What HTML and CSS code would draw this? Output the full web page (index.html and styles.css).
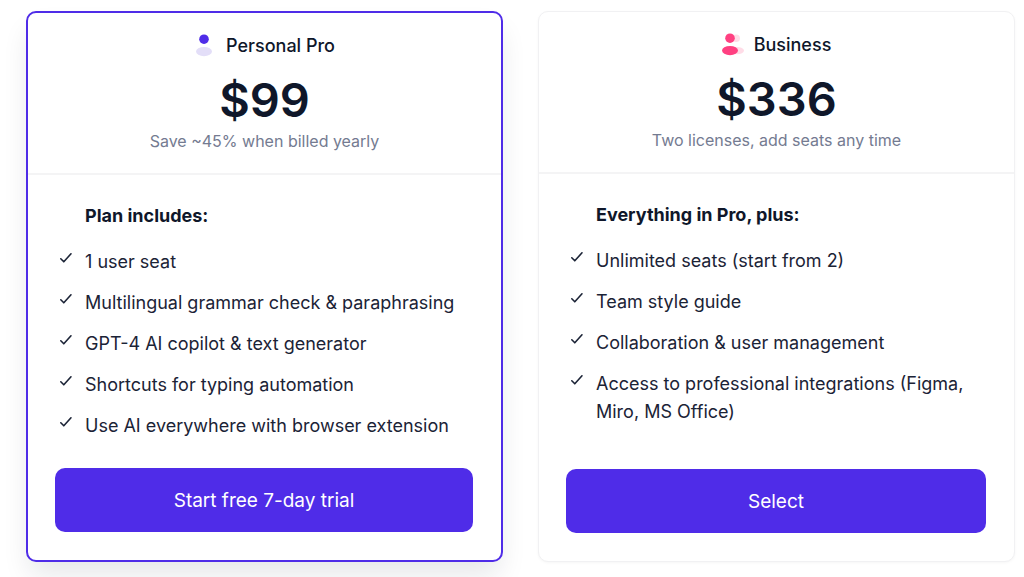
FILE: index.html
```html
<!DOCTYPE html>
<html lang="en">
<head>
  <meta charset="UTF-8" />
  <meta name="viewport" content="width=device-width, initial-scale=1.0" />
  <title>Pricing</title>
  <link rel="stylesheet" href="styles.css">
</head>
<body>
  <svg class="sprite" aria-hidden="true">
    <symbol id="check" viewBox="0 0 14 14">
      <path d="M1.8 7.8 L4.8 10.8 L12 2.8" fill="none" stroke="currentColor" stroke-width="1.6" stroke-linecap="round" stroke-linejoin="round" />
    </symbol>
  </svg>

  <main class="plans">
    <section class="plan featured">
      <header class="plan-header">
        <h2 class="plan-name">
          <svg class="plan-icon" viewBox="0 0 24 24" aria-hidden="true">
            <circle cx="10" cy="5.2" r="4.8" fill="#4f2ce8" />
            <ellipse cx="10" cy="17.6" rx="8" ry="4.6" fill="#e3def8" />
          </svg>
          Personal Pro
        </h2>
        <div class="price">$99</div>
        <p class="note">Save ~45% when billed yearly</p>
      </header>
      <div class="plan-body">
        <h3 class="list-title">Plan includes:</h3>
        <ul class="features">
          <li><svg class="check"><use href="#check" /></svg>1 user seat</li>
          <li><svg class="check"><use href="#check" /></svg>Multilingual grammar check &amp; paraphrasing</li>
          <li><svg class="check"><use href="#check" /></svg>GPT-4 AI copilot &amp; text generator</li>
          <li><svg class="check"><use href="#check" /></svg>Shortcuts for typing automation</li>
          <li><svg class="check"><use href="#check" /></svg>Use AI everywhere with browser extension</li>
        </ul>
        <button class="plan-btn" type="button">Start free 7-day trial</button>
      </div>
    </section>

    <section class="plan">
      <header class="plan-header">
        <h2 class="plan-name">
          <svg class="plan-icon" viewBox="0 0 24 24" aria-hidden="true">
            <circle cx="14.2" cy="5.2" r="3.8" fill="#ffdce7" />
            <ellipse cx="15" cy="17.6" rx="7" ry="3.6" fill="#ffdce7" />
            <circle cx="8" cy="5.2" r="4.8" fill="#ff4081" />
            <ellipse cx="8" cy="17.6" rx="8" ry="4.6" fill="#ff4081" />
          </svg>
          Business
        </h2>
        <div class="price">$336</div>
        <p class="note">Two licenses, add seats any time</p>
      </header>
      <div class="plan-body">
        <h3 class="list-title">Everything in Pro, plus:</h3>
        <ul class="features">
          <li><svg class="check"><use href="#check" /></svg>Unlimited seats (start from 2)</li>
          <li><svg class="check"><use href="#check" /></svg>Team style guide</li>
          <li><svg class="check"><use href="#check" /></svg>Collaboration &amp; user management</li>
          <li><svg class="check"><use href="#check" /></svg>Access to professional integrations (Figma, Miro, MS Office)</li>
        </ul>
        <button class="plan-btn" type="button">Select</button>
      </div>
    </section>
  </main>
</body>
</html>
```

FILE: styles.css
```css
* {
  box-sizing: border-box;
}

body {
  margin: 0;
  background: #fff;
  font-family: Inter, sans-serif;
  font-size: 18px;
  line-height: 28px;
  color: #0f172a;
}

.sprite {
  display: none;
}

.plans {
  display: grid;
  grid-template-columns: 1fr 1fr;
  gap: 35px;
  padding: 11px 9px 15px 26px;
}

.plan {
  display: flex;
  flex-direction: column;
  border: 1px solid #f1f1f3;
  border-radius: 10px;
  background: #fff;
  box-shadow: 0 1px 3px rgba(0, 0, 0, 0.04);
}

.plan.featured {
  border: 2px solid #4f2ce8;
  box-shadow: 0 16px 28px -4px rgba(15, 23, 42, 0.11);
}

.plan-header {
  padding: 19px 28px 18px;
  border-bottom: 2px solid #f4f4f5;
  text-align: center;
}

.plan-name {
  display: flex;
  justify-content: center;
  align-items: center;
  gap: 8px;
  margin: 0;
  font-size: 18px;
  font-weight: 500;
}

.plan-icon {
  width: 24px;
  height: 24px;
}

.price {
  margin-top: 13px;
  font-size: 47px;
  font-weight: 600;
  line-height: 54px;
}

.note {
  margin: 0;
  font-size: 16px;
  color: #747b91;
}

.plan-body {
  display: flex;
  flex: 1;
  flex-direction: column;
  padding: 27px 28px 28px 27px;
}

.list-title {
  margin: 0 0 18px;
  padding-left: 30px;
  font-size: 18px;
  font-weight: 700;
}

.features {
  display: flex;
  flex-direction: column;
  gap: 13px;
  margin: 0 0 28px;
  padding: 0;
  list-style: none;
  color: #1b2336;
}

.features li {
  display: flex;
  gap: 12px;
  padding-left: 4px;
}

.check {
  flex: none;
  width: 14px;
  height: 14px;
  margin-top: 3px;
}

.plan-btn {
  height: 64px;
  margin-top: auto;
  border: none;
  border-radius: 10px;
  background: #4f2ce8;
  color: #fff;
  font-family: inherit;
  font-size: 19px;
  cursor: pointer;
}

.plan-btn:hover {
  background: #4322d0;
}

@media (max-width: 720px) {
  .plans {
    grid-template-columns: 1fr;
  }
}
```
